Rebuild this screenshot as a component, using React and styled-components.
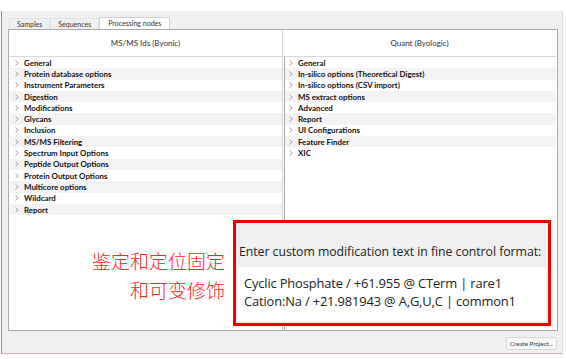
import React from 'react';
import styled, { createGlobalStyle } from 'styled-components';

const leftNodes = [
  'General',
  'Protein database options',
  'Instrument Parameters',
  'Digestion',
  'Modifications',
  'Glycans',
  'Inclusion',
  'MS/MS Filtering',
  'Spectrum Input Options',
  'Peptide Output Options',
  'Protein Output Options',
  'Multicore options',
  'Wildcard',
  'Report',
];

const rightNodes = [
  'General',
  'In-silico options (Theoretical Digest)',
  'In-silico options (CSV import)',
  'MS extract options',
  'Advanced',
  'Report',
  'UI Configurations',
  'Feature Finder',
  'XIC',
];

const GlobalStyle = createGlobalStyle`
  html, body {
    margin: 0;
    padding: 0;
    background: #fff;
  }
  body {
    width: 566px;
    height: 359px;
    overflow: hidden;
    font-family: Lato, "Open Sans", sans-serif;
  }
`;

const Window = styled.div`
  position: relative;
  margin: 11px 0 0 1px;
  width: 562px;
  height: 343px;
  box-sizing: border-box;
  background: #f0f0f0;
  border-left: 1px solid #8c8c8c;
  border-right: 1px solid #dadada;
  border-bottom: 1px solid #dcb0b0;
  padding: 6px 5px 0 6px;
  display: flex;
  flex-direction: column;
`;

const TabBar = styled.div`
  display: flex;
  align-items: flex-end;
  height: 12px;
  padding-left: 1px;
`;

const Tab = styled.div`
  height: ${p => (p.$active ? '12px' : '11px')};
  box-sizing: border-box;
  padding: 0 ${p => p.$pad}px;
  font-size: 7px;
  line-height: 11px;
  color: #333;
  background: ${p => (p.$active ? '#fff' : '#f0f0f0')};
  border: 1px solid ${p => (p.$active ? '#d0d0d0' : '#e2e2e2')};
  border-bottom: none;
`;

const Panel = styled.div`
  flex: none;
  width: 550px;
  height: 302px;
  box-sizing: border-box;
  background: #fff;
  border: 1px solid #a9a9a9;
  display: grid;
  grid-template-columns: 274px 1fr;
`;

const Pane = styled.div`
  display: flex;
  flex-direction: column;
  border-right: 1px solid ${p => (p.$last ? 'transparent' : '#d8d8d8')};
`;

const PaneHeader = styled.div`
  height: 26px;
  border-bottom: 1px solid #d8d8d8;
  display: flex;
  align-items: center;
  justify-content: center;
  font-size: 8px;
  color: #333;
`;

const Tree = styled.div`
  flex: 1;
  margin-left: ${p => (p.$inset ? '1px' : '0')};
  border-left: 1px solid ${p => (p.$inset ? '#a8a8a8' : 'transparent')};
`;

const Row = styled.div`
  height: 11.3px;
  display: flex;
  align-items: center;
  background: ${p => (p.$odd ? '#f3f3f3' : '#fff')};
  padding-left: ${p => p.$indent}px;
  font-size: 7.9px;
  font-weight: 700;
  color: #111;
  white-space: nowrap;
`;

const Chevron = styled.svg`
  width: 4px;
  height: 6px;
  margin-right: 5px;
  flex: none;
`;

const Footer = styled.div`
  flex: 1;
  display: flex;
  justify-content: flex-end;
  align-items: flex-start;
  padding-top: 6px;
`;

const Button = styled.div`
  width: 51px;
  height: 13px;
  box-sizing: border-box;
  border: 1px solid #d6d6d6;
  border-radius: 2px;
  background: #f7f7f7;
  font-size: 6.2px;
  color: #333;
  display: flex;
  align-items: center;
  justify-content: center;
  white-space: nowrap;
`;

const Callout = styled.div`
  position: absolute;
  right: 337px;
  top: 236px;
  text-align: right;
  color: #f22;
  font-family: "Noto Sans CJK SC", sans-serif;
  font-size: 19px;
  line-height: 28.5px;
  font-weight: 300;
`;

const Highlight = styled.div`
  position: absolute;
  left: 231px;
  top: 209px;
  width: 318px;
  height: 106px;
  box-sizing: border-box;
  border: 3px solid #ee0000;
  background: #f0f0f0;
  display: flex;
  flex-direction: column;
  padding: 0 2px 2px 2px;
`;

const Prompt = styled.div`
  flex: 1;
  display: flex;
  align-items: flex-end;
  padding: 0 0 7px 1px;
  font-family: "Open Sans", sans-serif;
  font-size: 12.3px;
  color: #222;
  white-space: nowrap;
  letter-spacing: -0.05px;
`;

const Editor = styled.div`
  height: 54px;
  background: #fff;
  padding: 7px 0 0 6px;
  box-sizing: border-box;
  font-family: "Open Sans", sans-serif;
  font-size: 12.9px;
  line-height: 18px;
  color: #222;
  white-space: nowrap;
  letter-spacing: -0.15px;
`;

function NodeTree({ nodes, indent, inset }) {
  return (
    <Tree $inset={inset}>
      {nodes.map((name, i) => (
        <Row key={name + i} $odd={i % 2 === 1} $indent={indent}>
          <Chevron viewBox="0 0 4 6">
            <path d="M0.6 0.6 L3.2 3 L0.6 5.4" fill="none" stroke="#8a8a8a" strokeWidth="0.8" />
          </Chevron>
          {name}
        </Row>
      ))}
    </Tree>
  );
}

export default function App() {
  return (
    <>
      <GlobalStyle />
      <Window>
        <TabBar>
          <Tab $pad={7}>Samples</Tab>
          <Tab $pad={7}>Sequences</Tab>
          <Tab $pad={8} $active>Processing nodes</Tab>
        </TabBar>
        <Panel>
          <Pane>
            <PaneHeader>MS/MS Ids (Byonic)</PaneHeader>
            <NodeTree nodes={leftNodes} indent={5} />
          </Pane>
          <Pane $last>
            <PaneHeader>Quant (Byologic)</PaneHeader>
            <NodeTree nodes={rightNodes} indent={4} inset />
          </Pane>
        </Panel>
        <Footer>
          <Button>Create Project...</Button>
        </Footer>
        <Callout>
          鉴定和定位固定
          <br />
          和可变修饰
        </Callout>
        <Highlight>
          <Prompt>Enter custom modification text in fine control format:</Prompt>
          <Editor>
            Cyclic Phosphate / +61.955 @ CTerm | rare1
            <br />
            Cation:Na / +21.981943 @ A,G,U,C | common1
          </Editor>
        </Highlight>
      </Window>
    </>
  );
}
